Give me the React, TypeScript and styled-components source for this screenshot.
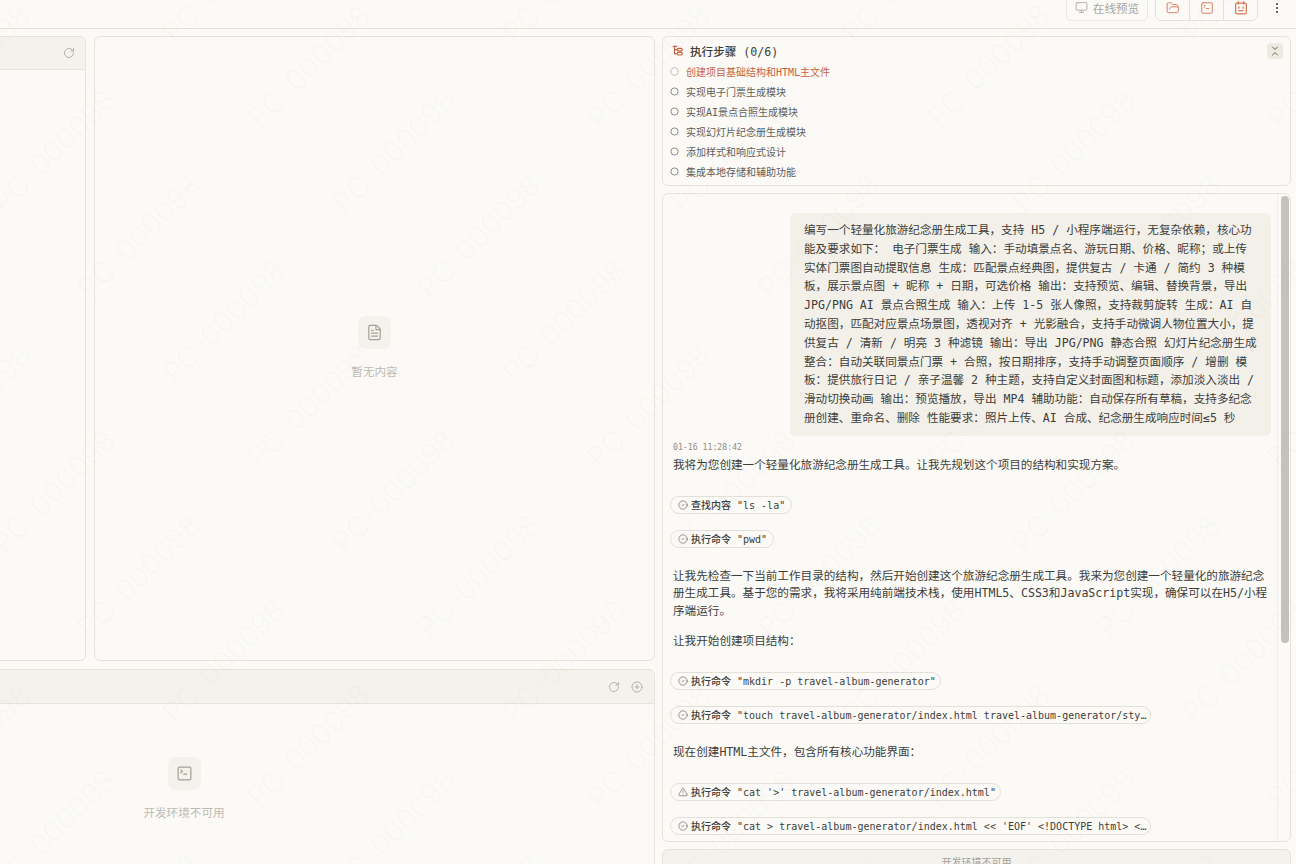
import React from "react";
import styled, { createGlobalStyle } from "styled-components";
import {
  ChevronsDownUp,
  CircleCheck,
  CircleDashed,
  CirclePlus,
  FileText,
  FolderOpen,
  Monitor,
  RotateCw,
  SquareTerminal,
  TriangleAlert,
} from "lucide-react";

const MONO = `"DejaVu Sans Mono", "Noto Sans CJK SC", monospace`;
const SANS = `"Noto Sans CJK SC", "Noto Sans", sans-serif`;

const Global = createGlobalStyle`
  html, body { margin: 0; padding: 0; height: 100%; overflow: hidden; background: #fbfaf7; }
  #root { height: 864px; }
  * { box-sizing: border-box; }
`;

const Page = styled.div`
  position: relative;
  width: 1296px;
  height: 864px;
  overflow: hidden;
  background: #fbfaf7;
  color: #3d3d3a;
  font-family: ${MONO};
  -webkit-font-smoothing: antialiased;
`;

const TopBar = styled.header`
  height: 29px;
  border-bottom: 1px solid #e3e0d8;
  display: flex;
  justify-content: flex-end;
  align-items: flex-end;
  gap: 7px;
  padding: 0 14px 7px 0;
  overflow: hidden;
`;

const PreviewButton = styled.div`
  width: 82px;
  height: 27px;
  flex: none;
  display: flex;
  align-items: center;
  justify-content: center;
  gap: 5px;
  border: 1px solid #ece9e2;
  border-radius: 5px;
  color: #a9a69e;
  font: 11.6px ${SANS};
`;

const ToolGroup = styled.div`
  width: 103px;
  height: 27px;
  flex: none;
  display: flex;
  border: 1px solid #e3e0d8;
  border-radius: 6px;
`;

const ToolCell = styled.div`
  flex: 1;
  display: flex;
  align-items: center;
  justify-content: center;
  color: #d97757;
  & + & { border-left: 1px solid #e3e0d8; }
`;

const Kebab = styled.div`
  width: 10px;
  height: 27px;
  margin-left: 7px;
  display: flex;
  flex-direction: column;
  align-items: center;
  justify-content: center;
  gap: 2px;
  flex: none;
  span { width: 2px; height: 2px; border-radius: 50%; background: #3d3d3a; }
`;

const Workspace = styled.main`
  display: flex;
  gap: 7px;
  padding: 7px 5px 0 0;
  margin-left: -287px;
`;

const LeftArea = styled.div`
  width: 942px;
  flex: none;
  display: flex;
  flex-direction: column;
  gap: 8px;
`;

const TopPanels = styled.div`
  display: flex;
  gap: 8px;
  height: 625px;
`;

const Panel = styled.section<{ $width?: number }>`
  border: 1px solid #e6e3db;
  border-radius: 6px;
  display: flex;
  flex-direction: column;
  overflow: hidden;
  ${(p) => (p.$width ? `width: ${p.$width}px; flex: none;` : "flex: 1;")}
`;

const PanelHeader = styled.div<{ $height: number; $right: number }>`
  height: ${(p) => p.$height}px;
  flex: none;
  background: #f4f2ec;
  border-bottom: 1px solid #e6e3db;
  display: flex;
  align-items: center;
  justify-content: flex-end;
  gap: 11px;
  padding-right: ${(p) => p.$right}px;
  color: #a5a299;
`;

const EmptyBody = styled.div`
  flex: 1;
  display: flex;
  flex-direction: column;
  align-items: center;
  justify-content: center;
  gap: 14px;
  color: #bdbab2;
  font: 11.6px/16px ${SANS};
`;

const ContentEmpty = styled(EmptyBody)`
  padding-bottom: 2px;
`;

const EmptyTile = styled.div`
  width: 33px;
  height: 33px;
  border-radius: 8px;
  background: #f4f2ec;
  color: #a5a093;
  display: flex;
  align-items: center;
  justify-content: center;
`;

const TerminalPanel = styled(Panel)`
  flex: none;
  height: 205px;
`;

const RightColumn = styled.div`
  width: 629px;
  flex: none;
  display: flex;
  flex-direction: column;
  gap: 7px;
`;

const StepsCard = styled.section`
  position: relative;
  height: 150px;
  border: 1px solid #e6e3db;
  border-radius: 6px;
  padding: 5px 7px 0;
`;

const StepsTitle = styled.div`
  height: 17px;
  padding-left: 2px;
  display: flex;
  align-items: center;
  gap: 7px;
  font-size: 11.6px;
  font-weight: 500;
  color: #3d3d3a;
  svg { color: #c6613f; flex: none; }
`;

const StepList = styled.ol`
  list-style: none;
  margin: 2px 0 0;
  padding: 0;
`;

const Step = styled.li<{ $active?: boolean }>`
  height: 20px;
  display: flex;
  align-items: center;
  gap: 7px;
  font-size: 10px;
  color: ${(p) => (p.$active ? "#c6613f" : "#5e5d59")};
  svg { color: #8f8c84; flex: none; }
`;

const Collapse = styled.button`
  position: absolute;
  top: 6px;
  right: 7px;
  width: 16px;
  height: 16px;
  padding: 0;
  border: 0;
  border-radius: 4px;
  background: #eceae1;
  color: #3d3d3a;
  display: flex;
  align-items: center;
  justify-content: center;
`;

const ChatCard = styled.section`
  height: 649px;
  border: 1px solid #e6e3db;
  border-radius: 6px;
  display: flex;
  overflow: hidden;
`;

const ChatScroll = styled.div`
  flex: 1;
  min-width: 0;
  padding: 19px 7px 0 7px;
  overflow: hidden;
`;

const ScrollTrack = styled.div`
  width: 13px;
  flex: none;
  border-left: 1px solid #f0eee8;
  padding: 2px 1px 0 3px;
`;

const ScrollThumb = styled.div`
  width: 8px;
  height: 447px;
  border-radius: 4px;
  background: #c4c2bd;
`;

const UserBubble = styled.div`
  width: 481px;
  height: 223px;
  margin-left: 120px;
  padding: 8px 14px;
  border-radius: 6px;
  background: #f2f0e9;
  color: #3d3d3a;
  font-size: 11.6px;
  line-height: 18.8px;
  white-space: pre;
`;

const BubbleLine = styled.div``;

const Stamp = styled.div`
  margin: 6px 0 0 3px;
  height: 11px;
  font-size: 8.2px;
  line-height: 11px;
  color: #8f8c84;
`;

const Para = styled.p<{ $top: number }>`
  margin: ${(p) => p.$top}px 0 0 3px;
  font-size: 11.6px;
  line-height: 17.6px;
  color: #3d3d3a;
  white-space: pre;
`;

const Pill = styled.div<{ $top: number; $width: number }>`
  margin-top: ${(p) => p.$top}px;
  width: ${(p) => p.$width}px;
  height: 18px;
  padding: 0 7px;
  border: 1px solid #e3e0d8;
  border-radius: 9px;
  display: flex;
  align-items: center;
  gap: 3px;
  font-size: 10px;
  font-weight: 500;
  color: #3d3d3a;
  white-space: pre;
  overflow: hidden;
  svg { flex: none; color: #5e5d59; }
`;

const BottomBar = styled.div`
  height: 40px;
  border: 1px solid #e6e3db;
  border-radius: 6px;
  background: #f4f2ec;
  color: #a5a299;
  font: 10px/24px ${SANS};
  text-align: center;
`;

const Watermarks = styled.div`
  position: absolute;
  left: -685px;
  top: 545px;
  transform: rotate(-45deg);
  transform-origin: 0 0;
  display: grid;
  grid-template-columns: repeat(14, 240.4px);
  grid-auto-rows: 120.2px;
  pointer-events: none;
`;

const Watermark = styled.span`
  font: 300 29px/29px "Inter", sans-serif;
  color: rgba(120, 110, 90, 0.03);
  white-space: nowrap;
  transform: translateY(-11px);
`;

const lines = [
  "编写一个轻量化旅游纪念册生成工具，支持 H5 / 小程序端运行，无复杂依赖，核心功",
  "能及要求如下： 电子门票生成 输入：手动填景点名、游玩日期、价格、昵称；或上传",
  "实体门票图自动提取信息 生成：匹配景点经典图，提供复古 / 卡通 / 简约 3 种模",
  "板，展示景点图 + 昵称 + 日期，可选价格 输出：支持预览、编辑、替换背景，导出",
  "JPG/PNG AI 景点合照生成 输入：上传 1-5 张人像照，支持裁剪旋转 生成：AI 自",
  "动抠图，匹配对应景点场景图，透视对齐 + 光影融合，支持手动微调人物位置大小，提",
  "供复古 / 清新 / 明亮 3 种滤镜 输出：导出 JPG/PNG 静态合照 幻灯片纪念册生成",
  "整合：自动关联同景点门票 + 合照，按日期排序，支持手动调整页面顺序 / 增删 模",
  "板：提供旅行日记 / 亲子温馨 2 种主题，支持自定义封面图和标题，添加淡入淡出 /",
  "滑动切换动画 输出：预览播放，导出 MP4 辅助功能：自动保存所有草稿，支持多纪念",
  "册创建、重命名、删除 性能要求：照片上传、AI 合成、纪念册生成响应时间≤5 秒",
];

const steps = [
  "实现电子门票生成模块",
  "实现AI景点合照生成模块",
  "实现幻灯片纪念册生成模块",
  "添加样式和响应式设计",
  "集成本地存储和辅助功能",
];

const CalendarFace = () => (
  <svg width="14" height="14" viewBox="0 0 13 13" fill="none" stroke="currentColor" strokeWidth="1.1">
    <rect x="1.5" y="2" width="10" height="10" rx="1.5" />
    <path d="M4 .5V3M9 .5V3M4.6 5.4v1.4M8.4 5.4v1.4M4.5 9h4" strokeLinecap="round" />
  </svg>
);

const StepsIcon = () => (
  <svg width="11" height="11" viewBox="0 0 11 11" fill="none" stroke="currentColor" strokeWidth="1.2">
    <path d="M.8 1.3h4.4M2.6 1.3v7.4h2.2M2.6 4.6h2.2" />
    <rect x="5.2" y="3.3" width="5" height="2.6" rx="1.1" />
    <rect x="5.2" y="7.4" width="5" height="2.6" rx="1.1" />
  </svg>
);

export default function App() {
  return (
    <Page>
      <Global />
      <TopBar>
        <PreviewButton>
          <Monitor size={13} strokeWidth={1.6} />
          在线预览
        </PreviewButton>
        <ToolGroup>
          <ToolCell>
            <FolderOpen size={14} strokeWidth={1.6} />
          </ToolCell>
          <ToolCell>
            <SquareTerminal size={14} strokeWidth={1.6} />
          </ToolCell>
          <ToolCell>
            <CalendarFace />
          </ToolCell>
        </ToolGroup>
        <Kebab>
          <span />
          <span />
          <span />
        </Kebab>
      </TopBar>
      <Workspace>
        <LeftArea>
          <TopPanels>
            <Panel $width={373}>
              <PanelHeader $height={33} $right={10}>
                <RotateCw size={12} strokeWidth={1.6} />
              </PanelHeader>
            </Panel>
            <Panel>
              <ContentEmpty>
                <EmptyTile>
                  <FileText size={17} strokeWidth={1.7} />
                </EmptyTile>
                暂无内容
              </ContentEmpty>
            </Panel>
          </TopPanels>
          <TerminalPanel>
            <PanelHeader $height={34} $right={11}>
              <RotateCw size={12} strokeWidth={1.6} />
              <CirclePlus size={12} strokeWidth={1.6} />
            </PanelHeader>
            <EmptyBody>
              <EmptyTile>
                <SquareTerminal size={17} strokeWidth={1.7} />
              </EmptyTile>
              开发环境不可用
            </EmptyBody>
          </TerminalPanel>
        </LeftArea>
        <RightColumn>
          <StepsCard>
            <StepsTitle>
              <StepsIcon />
              执行步骤 (0/6)
            </StepsTitle>
            <Collapse>
              <ChevronsDownUp size={12} strokeWidth={1.6} />
            </Collapse>
            <StepList>
              <Step $active>
                <CircleDashed size={9} strokeWidth={2} />
                创建项目基础结构和HTML主文件
              </Step>
              {steps.map((s) => (
                <Step key={s}>
                  <svg width="9" height="9" viewBox="0 0 9 9" fill="none" stroke="currentColor">
                    <circle cx="4.5" cy="4.5" r="3.6" />
                  </svg>
                  {s}
                </Step>
              ))}
            </StepList>
          </StepsCard>
          <ChatCard>
            <ChatScroll>
              <UserBubble>
                {lines.map((l) => (
                  <BubbleLine key={l}>{l}</BubbleLine>
                ))}
              </UserBubble>
              <Stamp>01-16 11:28:42</Stamp>
              <Para $top={4}>我将为您创建一个轻量化旅游纪念册生成工具。让我先规划这个项目的结构和实现方案。</Para>
              <Pill $top={21} $width={122}>
                <CircleCheck size={10} strokeWidth={1.5} />
                查找内容 "ls -la"
              </Pill>
              <Pill $top={16} $width={104}>
                <CircleCheck size={10} strokeWidth={1.5} />
                执行命令 "pwd"
              </Pill>
              <Para $top={20}>
                {"让我先检查一下当前工作目录的结构，然后开始创建这个旅游纪念册生成工具。我来为您创建一个轻量化的旅游纪念\n册生成工具。基于您的需求，我将采用纯前端技术栈，使用HTML5、CSS3和JavaScript实现，确保可以在H5/小程\n序端运行。"}
              </Para>
              <Para $top={13}>让我开始创建项目结构：</Para>
              <Pill $top={21} $width={271}>
                <CircleCheck size={10} strokeWidth={1.5} />
                执行命令 "mkdir -p travel-album-generator"
              </Pill>
              <Pill $top={16} $width={481}>
                <CircleCheck size={10} strokeWidth={1.5} />
                执行命令 "touch travel-album-generator/index.html travel-album-generator/sty…
              </Pill>
              <Para $top={20}>现在创建HTML主文件，包含所有核心功能界面：</Para>
              <Pill $top={21} $width={331}>
                <TriangleAlert size={10} strokeWidth={1.5} />
                执行命令 "cat '&gt;' travel-album-generator/index.html"
              </Pill>
              <Pill $top={16} $width={481}>
                <CircleCheck size={10} strokeWidth={1.5} />
                执行命令 "cat &gt; travel-album-generator/index.html &lt;&lt; 'EOF' &lt;!DOCTYPE html&gt; &lt;…
              </Pill>
            </ChatScroll>
            <ScrollTrack>
              <ScrollThumb />
            </ScrollTrack>
          </ChatCard>
          <BottomBar>开发环境不可用</BottomBar>
        </RightColumn>
      </Workspace>
      <Watermarks aria-hidden>
        {Array.from({ length: 14 * 26 }, (_, i) => (
          <Watermark key={i}>PC-000098</Watermark>
        ))}
      </Watermarks>
    </Page>
  );
}
